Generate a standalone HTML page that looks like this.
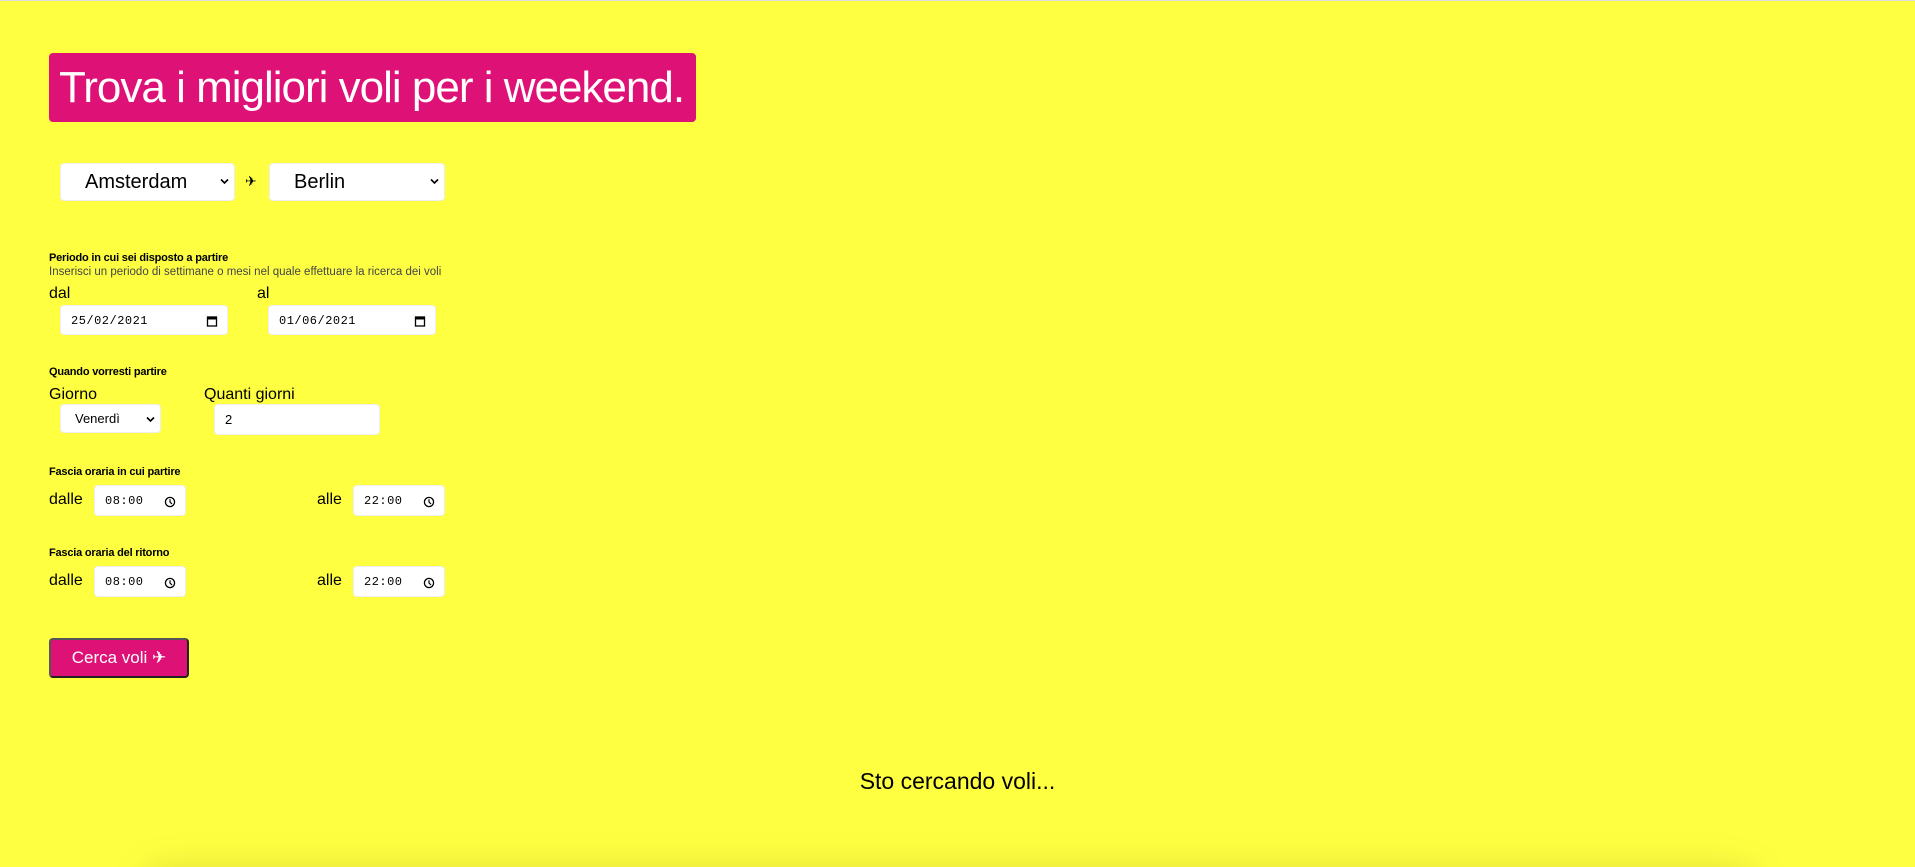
<!DOCTYPE html>
<html><head><meta charset="utf-8"><style>
*{box-sizing:border-box;margin:0;padding:0}
html,body{width:1915px;height:867px;overflow:hidden}
body{background:#ffff42;font-family:"Liberation Sans",sans-serif;color:#000;position:relative;border-top:1px solid #ddd}
.a{position:absolute;white-space:nowrap}
.title{left:49px;top:52px;width:647px;height:69px;background:#de1276;border-radius:4px;color:#fff;font-size:44px;line-height:69px;padding-left:10px;letter-spacing:-1px}
.box{position:absolute;background:#fff;border-radius:4px;border:1px solid #eee}
.sel{font-size:20px;line-height:36px;padding-left:24px}
.chev{position:absolute;right:6px;top:0;font-size:12px}
.lbl{font-size:11px;font-weight:bold;letter-spacing:-0.2px}
.t16{font-size:16px}
.mono{font-family:"Liberation Mono",monospace;font-size:12px;line-height:30px;padding-left:10px;letter-spacing:0.5px}
.ic{position:absolute;right:9px;top:9px;width:12px;height:12px}
.btn{left:49px;top:637px;width:140px;height:40px;background:#de1276;border:2px solid #333;border-color:#555 #222 #222 #555;border-radius:4px;color:#fff;font-size:17px;line-height:36px;text-align:center}
#wrap{position:absolute;left:0;top:0;width:1915px;height:866px;overflow:hidden}
</style></head><body><div id="wrap">
<div class="a title">Trova i migliori voli per i weekend.</div>

<div class="box sel" style="left:60px;top:162px;width:175px;height:38px">Amsterdam<svg class="chev" style="top:14px;right:5px" width="9" height="7" viewBox="0 0 9 7"><path d="M1 1.5l3.5 3.5 3.5-3.5" stroke="#000" stroke-width="1.6" fill="none"/></svg></div>
<div class="a" style="left:245px;top:172px;font-size:14px">✈</div>
<div class="box sel" style="left:269px;top:162px;width:176px;height:38px">Berlin<svg class="chev" style="top:14px;right:5px" width="9" height="7" viewBox="0 0 9 7"><path d="M1 1.5l3.5 3.5 3.5-3.5" stroke="#000" stroke-width="1.6" fill="none"/></svg></div>

<div class="a lbl" style="left:49px;top:251px">Periodo in cui sei disposto a partire</div>
<div class="a" style="left:49px;top:265px;font-size:11.5px;color:#444">Inserisci un periodo di settimane o mesi nel quale effettuare la ricerca dei voli</div>
<div class="a t16" style="left:49px;top:284px">dal</div>
<div class="a t16" style="left:257px;top:284px">al</div>
<div class="box mono" style="left:60px;top:304px;width:168px;height:30px">25/02/2021<svg class="ic" viewBox="0 0 12 12"><rect x="1.5" y="2" width="9" height="9" fill="none" stroke="#000" stroke-width="1.3"/><rect x="1.5" y="2" width="9" height="2.5" fill="#000"/></svg></div>
<div class="box mono" style="left:268px;top:304px;width:168px;height:30px">01/06/2021<svg class="ic" viewBox="0 0 12 12"><rect x="1.5" y="2" width="9" height="9" fill="none" stroke="#000" stroke-width="1.3"/><rect x="1.5" y="2" width="9" height="2.5" fill="#000"/></svg></div>

<div class="a lbl" style="left:49px;top:365px">Quando vorresti partire</div>
<div class="a t16" style="left:49px;top:385px">Giorno</div>
<div class="a t16" style="left:204px;top:385px">Quanti giorni</div>
<div class="box" style="left:60px;top:403px;width:101px;height:29px;font-size:13px;line-height:27px;padding-left:14px">Venerdì<svg class="chev" style="top:11px;right:5px" width="9" height="7" viewBox="0 0 9 7"><path d="M1 1.5l3.5 3.5 3.5-3.5" stroke="#000" stroke-width="1.6" fill="none"/></svg></div>
<div class="box" style="left:214px;top:403px;width:166px;height:31px;font-size:13px;line-height:29px;padding-left:10px">2</div>

<div class="a lbl" style="left:49px;top:465px">Fascia oraria in cui partire</div>
<div class="a t16" style="left:49px;top:490px">dalle</div>
<div class="box mono" style="left:94px;top:484px;width:92px;height:31px">08:00<svg class="ic" style="top:10px" viewBox="0 0 12 12"><circle cx="6" cy="6" r="4.6" fill="none" stroke="#000" stroke-width="1.3"/><path d="M6 3.2V6l2 2" stroke="#000" stroke-width="1.2" fill="none"/></svg></div>
<div class="a t16" style="left:317px;top:490px">alle</div>
<div class="box mono" style="left:353px;top:484px;width:92px;height:31px">22:00<svg class="ic" style="top:10px" viewBox="0 0 12 12"><circle cx="6" cy="6" r="4.6" fill="none" stroke="#000" stroke-width="1.3"/><path d="M6 3.2V6l2 2" stroke="#000" stroke-width="1.2" fill="none"/></svg></div>

<div class="a lbl" style="left:49px;top:546px">Fascia oraria del ritorno</div>
<div class="a t16" style="left:49px;top:571px">dalle</div>
<div class="box mono" style="left:94px;top:565px;width:92px;height:31px">08:00<svg class="ic" style="top:10px" viewBox="0 0 12 12"><circle cx="6" cy="6" r="4.6" fill="none" stroke="#000" stroke-width="1.3"/><path d="M6 3.2V6l2 2" stroke="#000" stroke-width="1.2" fill="none"/></svg></div>
<div class="a t16" style="left:317px;top:571px">alle</div>
<div class="box mono" style="left:353px;top:565px;width:92px;height:31px">22:00<svg class="ic" style="top:10px" viewBox="0 0 12 12"><circle cx="6" cy="6" r="4.6" fill="none" stroke="#000" stroke-width="1.3"/><path d="M6 3.2V6l2 2" stroke="#000" stroke-width="1.2" fill="none"/></svg></div>

<div class="a btn">Cerca voli ✈</div>

<div class="a" style="left:0;width:1915px;top:767px;text-align:center;font-size:23px">Sto cercando voli...</div>

<div class="a" style="left:150px;top:872px;width:1600px;height:100px;background:#ffff42;box-shadow:0 0 40px 4px rgba(0,0,0,0.12)"></div>
</div></body></html>
